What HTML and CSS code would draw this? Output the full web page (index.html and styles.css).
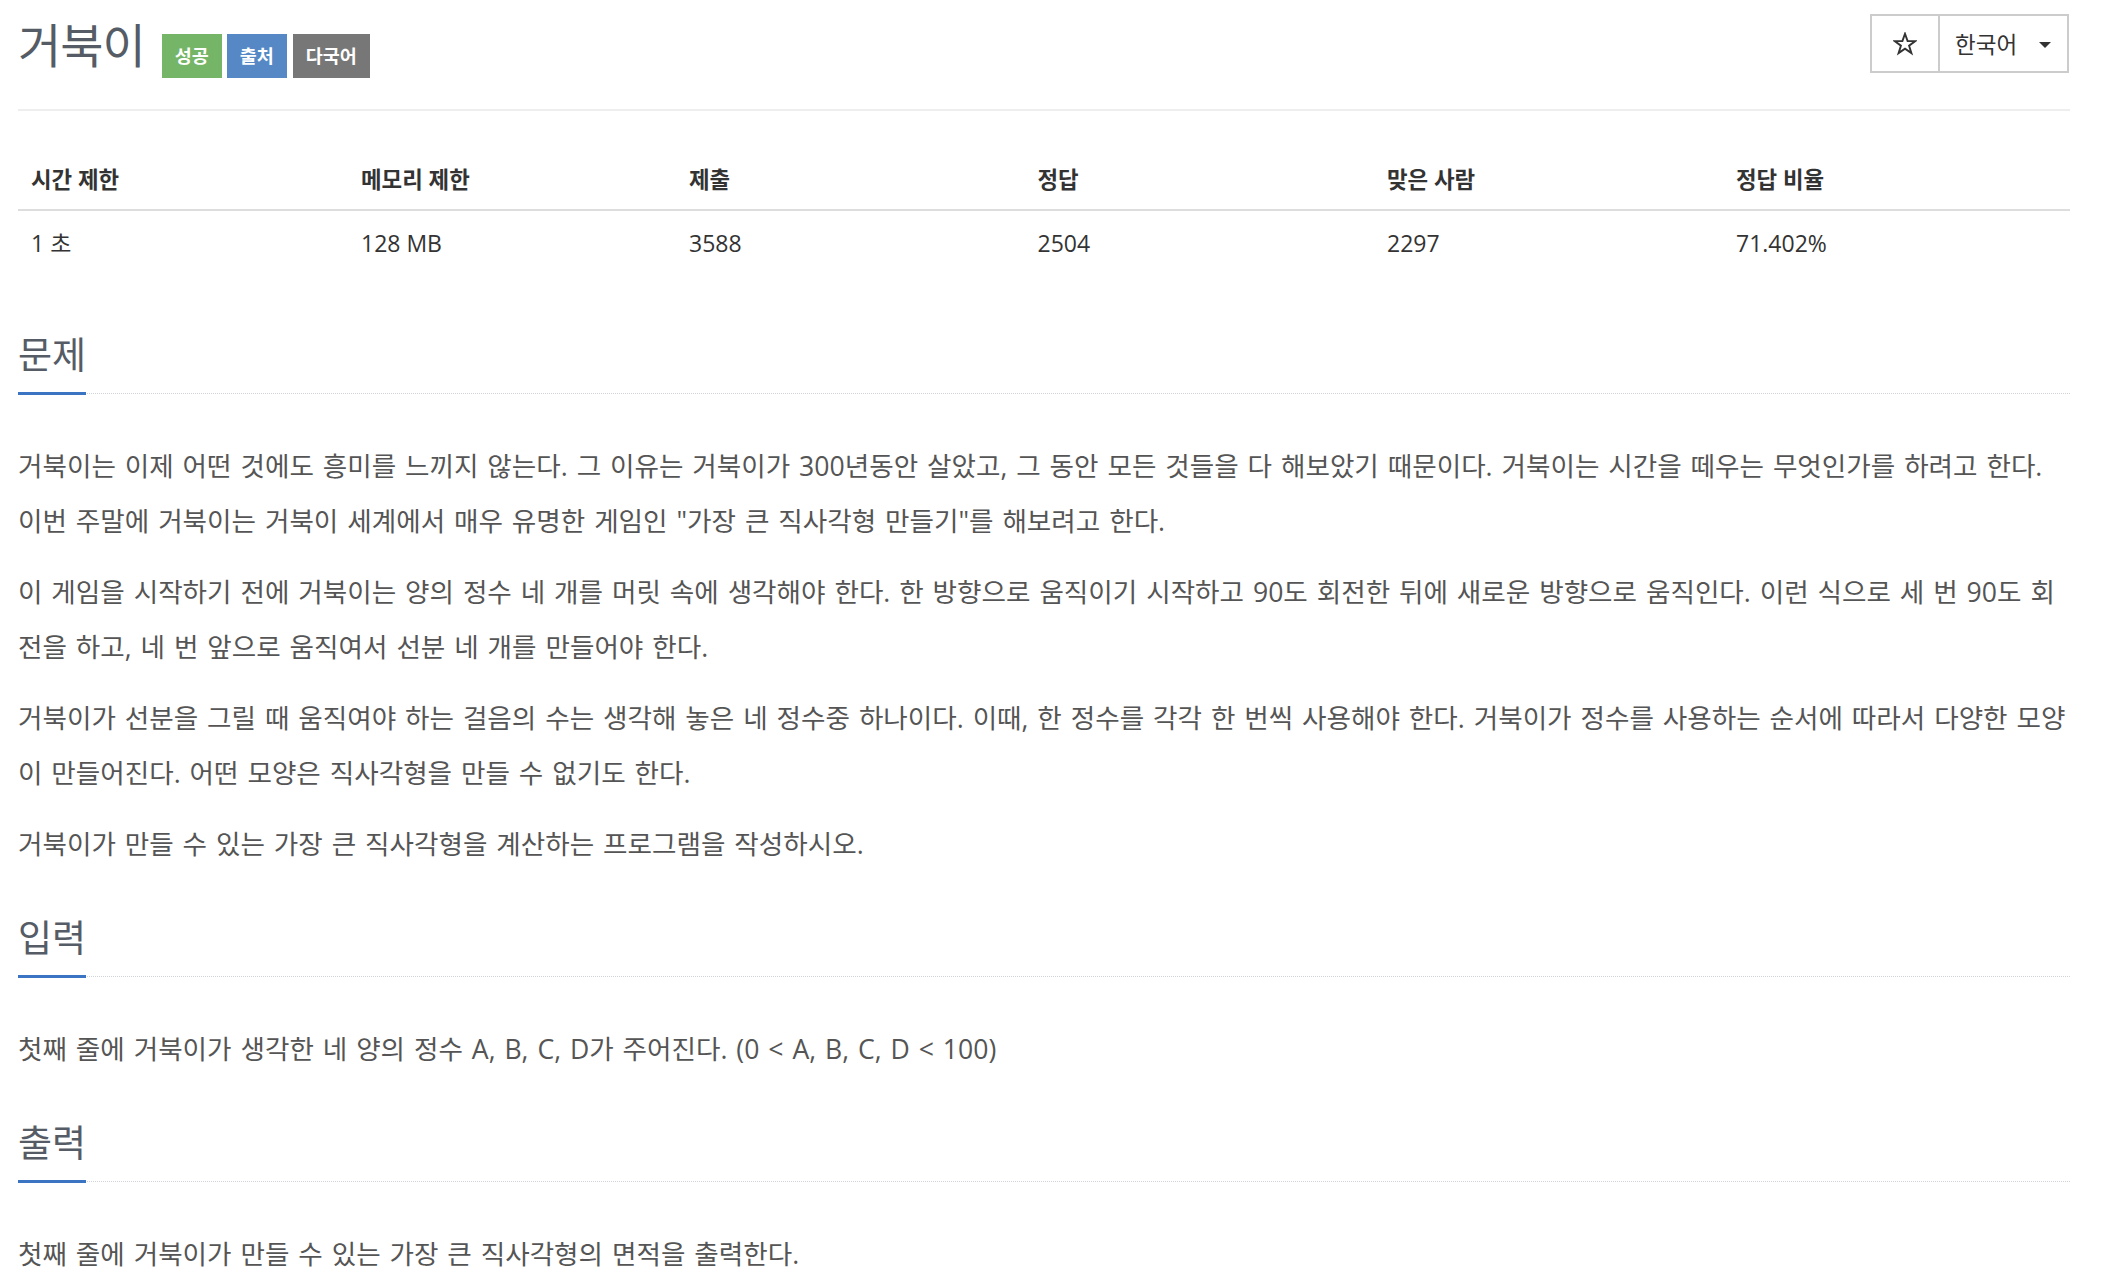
FILE: index.html
```html
<!DOCTYPE html>
<html lang="ko">
<head>
<meta charset="utf-8">
<title>거북이</title>
<link rel="stylesheet" href="styles.css">
</head>
<body>
<div class="page">
  <header class="page-header">
    <div class="title-block">
      <h1 class="title">거북이</h1>
      <span class="label label-success">성공</span>
      <span class="label label-info">출처</span>
      <span class="label label-default">다국어</span>
    </div>
    <div class="btn-group">
      <button class="btn btn-star" type="button">
        <svg class="star" viewBox="0 0 24 24" width="24" height="24"><polygon points="12,1.8 14.6,9.1 22.3,9.1 16.1,13.7 18.4,21.1 12,16.6 5.6,21.1 7.9,13.7 1.7,9.1 9.4,9.1" fill="none" stroke="#333" stroke-width="1.9" stroke-linejoin="miter"/></svg>
      </button>
      <button class="btn btn-lang" type="button">한국어<span class="caret"></span></button>
    </div>
  </header>

  <table class="info-table">
    <colgroup>
      <col class="c1"><col class="c2"><col class="c3"><col class="c4"><col class="c5"><col class="c6">
    </colgroup>
    <thead>
      <tr><th>시간 제한</th><th>메모리 제한</th><th>제출</th><th>정답</th><th>맞은 사람</th><th>정답 비율</th></tr>
    </thead>
    <tbody>
      <tr><td>1 초</td><td>128 MB</td><td>3588</td><td>2504</td><td>2297</td><td>71.402%</td></tr>
    </tbody>
  </table>

  <section class="section first">
    <div class="headline"><h2>문제</h2></div>
    <div class="problem-text">
      <p>거북이는 이제 어떤 것에도 흥미를 느끼지 않는다. 그 이유는 거북이가 300년동안 살았고, 그 동안 모든 것들을 다 해보았기 때문이다. 거북이는 시간을 떼우는 무엇인가를 하려고 한다.<br>이번 주말에 거북이는 거북이 세계에서 매우 유명한 게임인 "가장 큰 직사각형 만들기"를 해보려고 한다.</p>
      <p>이 게임을 시작하기 전에 거북이는 양의 정수 네 개를 머릿 속에 생각해야 한다. 한 방향으로 움직이기 시작하고 90도 회전한 뒤에 새로운 방향으로 움직인다. 이런 식으로 세 번 90도 회<br>전을 하고, 네 번 앞으로 움직여서 선분 네 개를 만들어야 한다.</p>
      <p>거북이가 선분을 그릴 때 움직여야 하는 걸음의 수는 생각해 놓은 네 정수중 하나이다. 이때, 한 정수를 각각 한 번씩 사용해야 한다. 거북이가 정수를 사용하는 순서에 따라서 다양한 모양<br>이 만들어진다. 어떤 모양은 직사각형을 만들 수 없기도 한다.</p>
      <p>거북이가 만들 수 있는 가장 큰 직사각형을 계산하는 프로그램을 작성하시오.</p>
    </div>
  </section>

  <section class="section">
    <div class="headline"><h2>입력</h2></div>
    <div class="problem-text">
      <p>첫째 줄에 거북이가 생각한 네 양의 정수 A, B, C, D가 주어진다. (0 &lt; A, B, C, D &lt; 100)</p>
    </div>
  </section>

  <section class="section">
    <div class="headline"><h2>출력</h2></div>
    <div class="problem-text">
      <p>첫째 줄에 거북이가 만들 수 있는 가장 큰 직사각형의 면적을 출력한다.</p>
    </div>
  </section>
</div>
</body>
</html>
```

FILE: styles.css
```css
html, body {
  margin: 0;
  padding: 0;
  background: #fff;
}

body {
  font-family: "Open Sans", "Noto Sans CJK KR", sans-serif;
  color: #333;
}

.page {
  width: 2052px;
  padding-left: 18px;
  display: flex;
  flex-direction: column;
}

/* ---------- header ---------- */
.page-header {
  display: flex;
  justify-content: space-between;
  align-items: flex-start;
  height: 109px;
  border-bottom: 2px solid #eee;
}

.title-block {
  display: flex;
  align-items: flex-start;
  padding-top: 21px;
}

.title {
  margin: 0 17px 0 0;
  font-size: 47px;
  line-height: 48px;
  font-weight: 400;
  color: #555c65;
  letter-spacing: -1px;
}

.label {
  margin-top: 13px;
  margin-right: 5px;
  height: 44px;
  line-height: 44px;
  padding: 0 13px;
  font-size: 18.5px;
  font-weight: 700;
  color: #fff;
}

.label-success { background: #75b567; }
.label-info { background: #5588c5; margin-right: 6px; }
.label-default { background: #777; }

.btn-group {
  display: flex;
  margin-top: 14px;
  margin-right: 1px;
  height: 59px;
  border: 2px solid #ccc;
  box-sizing: border-box;
}

.btn {
  border: 0;
  background: #fff;
  font-family: inherit;
  color: #333;
  margin: 0;
  padding: 0;
  display: flex;
  align-items: center;
}

.btn-star {
  width: 68px;
  justify-content: center;
  border-right: 2px solid #ccc;
}

.star {
  display: block;
}

.btn-lang {
  width: 127px;
  padding-left: 15px;
  font-size: 22.5px;
  box-sizing: border-box;
}

.caret {
  width: 0;
  height: 0;
  margin-left: 22px;
  margin-top: 3px;
  border-top: 6px solid #333;
  border-left: 6px solid transparent;
  border-right: 6px solid transparent;
}

/* ---------- info table ---------- */
.info-table {
  margin-top: 43px;
  width: 2052px;
  table-layout: fixed;
  border-collapse: collapse;
  font-size: 23px;
  color: #333;
}

.c1 { width: 330px; }
.c2 { width: 328px; }
.c3 { width: 348.5px; }
.c4 { width: 349.5px; }
.c5 { width: 349px; }
.c6 { width: 347px; }

.info-table th {
  text-align: left;
  font-weight: 700;
  font-size: 22.4px;
  line-height: 30px;
  padding: 11px 13px 14px;
  border-bottom: 2px solid #ddd;
}

.info-table td {
  line-height: 30px;
  padding: 17px 13px 8px;
}

/* ---------- sections ---------- */
.section {
  margin-top: 46px;
}

.section.first {
  margin-top: 69px;
}

.headline {
  display: flex;
  border-bottom: 1px dotted #cfd3d8;
}

.headline h2 {
  margin: 0 0 -2px;
  font-size: 37px;
  line-height: 40px;
  font-weight: 400;
  color: #555c65;
  padding-bottom: 17px;
  border-bottom: 3px solid #3a74c2;
}

.problem-text {
  margin-top: 45px;
  font-size: 26.6px;
  word-spacing: 2px;
  color: #555;
}

.problem-text p {
  margin: 0 0 16px;
  line-height: 55px;
  white-space: nowrap;
}

.problem-text p:last-child {
  margin-bottom: 0;
}
```
